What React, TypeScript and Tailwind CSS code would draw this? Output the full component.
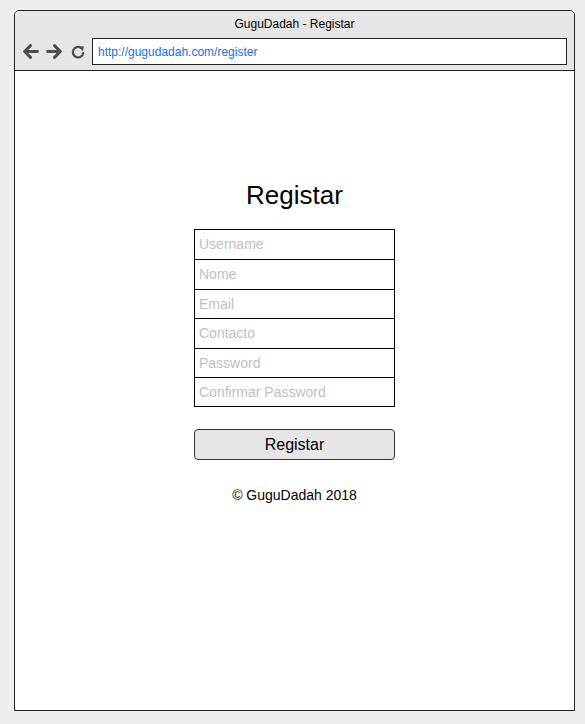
import React from "react";

const rows: [string, number][] = [
  ["Username", 29],
  ["Nome", 30],
  ["Email", 29],
  ["Contacto", 30],
  ["Password", 29],
  ["Confirmar Password", 29],
];

export default function App() {
  return (
    <div
      className="w-[585px] h-[724px] bg-[#eeeeee] pt-[10px] pl-[14px]"
      style={{ fontFamily: '"Liberation Sans", Arial, sans-serif' }}
    >
      <div className="w-[561px] h-[701px] border border-[#222222] rounded-t-[5px] bg-white flex flex-col overflow-hidden">
        <div className="h-[60px] bg-[#e6e6e6] border-b border-[#222222] flex flex-col">
          <div className="h-[25px] flex items-center justify-center text-[12px] text-black">
            GuguDadah - Registar
          </div>
          <div className="flex items-center mt-[2px]">
            <div className="flex items-center gap-[7px] pl-[7px] w-[77px]">
              <svg width="17" height="17" viewBox="0 0 16 16">
                <path d="M14.5 8H2.5M8 2.5L2.5 8L8 13.5" fill="none" stroke="#4d4d4d" strokeWidth="2.8" strokeLinecap="round" strokeLinejoin="round" />
              </svg>
              <svg width="17" height="17" viewBox="0 0 16 16">
                <path d="M1.5 8H13.5M8 2.5L13.5 8L8 13.5" fill="none" stroke="#4d4d4d" strokeWidth="2.8" strokeLinecap="round" strokeLinejoin="round" />
              </svg>
              <svg width="16" height="16" viewBox="0 0 16 16">
                <path d="M13.2 9A5.2 5.2 0 1 1 11 3.9" fill="none" stroke="#4d4d4d" strokeWidth="2.2" strokeLinecap="round" />
                <path d="M8.6 2.8L13.8 2.2L13 7.2Z" fill="#4d4d4d" />
              </svg>
            </div>
            <div className="w-[475px] h-[27px] bg-white border border-[#222222] flex items-center pl-[5px] text-[12px] text-[#1a6fe0]">
              http://gugudadah.com/register
            </div>
          </div>
        </div>
        <div className="flex flex-col items-center pt-[109px]">
          <div className="text-[26px] leading-[30px] text-black">Registar</div>
          <div className="mt-[19px] w-[201px] border border-black">
            {rows.map(([label, h], i) => (
              <div
                key={label}
                className={`flex items-center pl-[4px] text-[14px] text-[#c0c0c0] ${i > 0 ? "border-t border-black" : ""}`}
                style={{ height: h }}
              >
                {label}
              </div>
            ))}
          </div>
          <div className="mt-[22px] w-[201px] h-[31px] rounded-[4px] border border-[#333333] bg-[#e6e6e6] flex items-center justify-center text-[16px] text-black">
            Registar
          </div>
          <div className="mt-[27px] text-[14px] leading-[16px] text-black">© GuguDadah 2018</div>
        </div>
      </div>
    </div>
  );
}
